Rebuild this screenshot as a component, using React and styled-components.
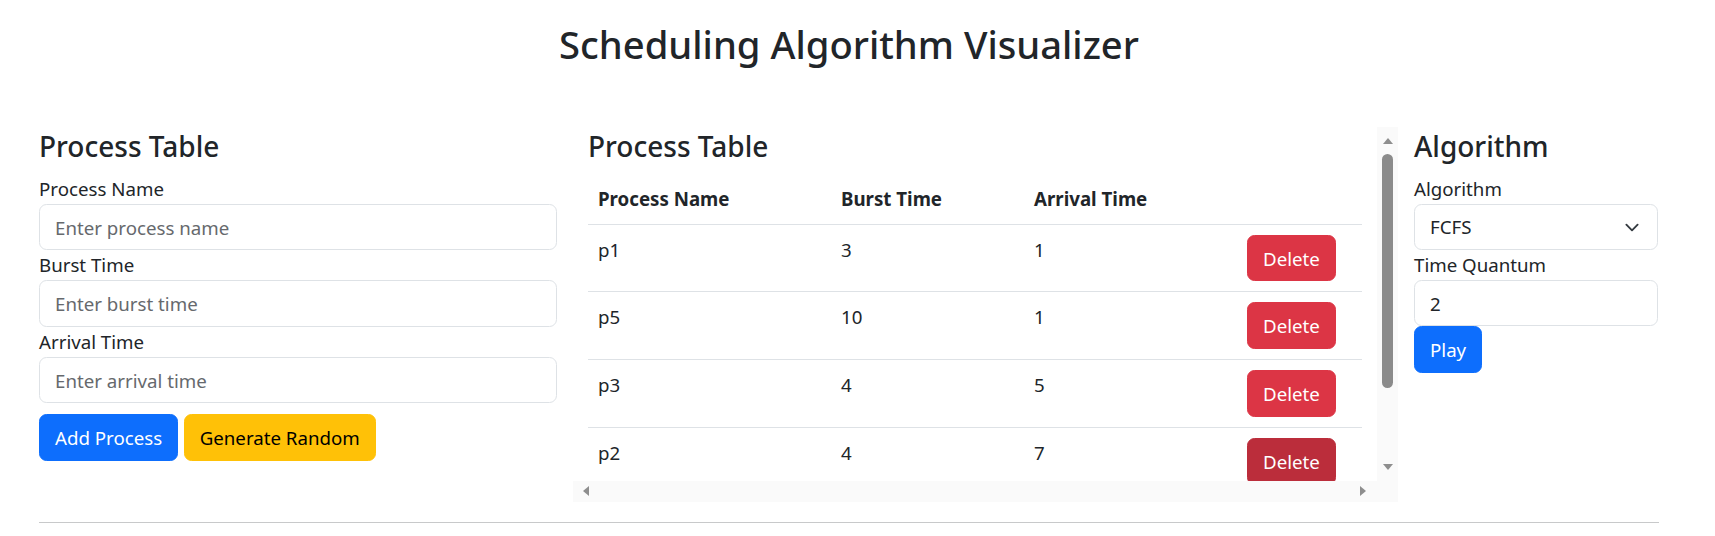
import styled, { createGlobalStyle } from "styled-components";

const GlobalStyle = createGlobalStyle`
  * {
    box-sizing: border-box;
  }

  body {
    margin: 0;
    background: #fff;
    color: #212529;
    font-family: "Noto Sans", "Segoe UI", sans-serif;
    font-size: 18.7px;
    line-height: 30px;
  }
`;

const tones = {
  primary: { bg: "#0d6efd", fg: "#fff" },
  warning: { bg: "#ffc107", fg: "#000" },
  danger: { bg: "#dc3545", fg: "#fff" },
  dangerHover: { bg: "#bb2d3b", fg: "#fff" },
};

const Page = styled.div`
  width: 1698px;
  padding: 20px 39px 0;
`;

const Title = styled.h2`
  margin: 0 0 58.7px;
  text-align: center;
  font-size: 38.2px;
  line-height: 48px;
  font-weight: 500;
`;

const Row = styled.div`
  display: grid;
  grid-template-columns: 518px 825px 244px;
  column-gap: 16px;
  align-items: start;
`;

const Panel = styled.section`
  display: flex;
  flex-direction: column;
  padding-top: 1px;
`;

const PanelTitle = styled.h4`
  margin: 0 0 10px;
  font-size: 28px;
  line-height: 36px;
  font-weight: 500;
`;

const Label = styled.label`
  display: block;
`;

const Field = styled.input`
  display: block;
  width: 100%;
  height: 46.5px;
  padding: 1px 15px 0;
  border: 1px solid #dee2e6;
  border-radius: 7.5px;
  background: #fff;
  color: #212529;
  font: inherit;
  outline: none;

  &::placeholder {
    color: #66696d;
    opacity: 1;
  }
`;

const SelectBox = styled.div`
  display: flex;
  align-items: center;
  justify-content: space-between;
  height: 46px;
  padding: 1px 15px 0;
  border: 1px solid #dee2e6;
  border-radius: 7.5px;
  background: #fff;
`;

const ButtonRow = styled.div`
  display: flex;
  gap: 5.5px;
  margin-top: ${(p) => p.$gap || 0}px;
`;

const Button = styled.button`
  height: ${(p) => p.$height || 47}px;
  padding: 1px 15px 0;
  border: 1px solid ${(p) => tones[p.$tone].bg};
  border-radius: 7.5px;
  background: ${(p) => tones[p.$tone].bg};
  color: ${(p) => tones[p.$tone].fg};
  font: inherit;
  line-height: 30px;
  cursor: pointer;
`;

const ScrollFrame = styled.div`
  display: grid;
  grid-template-columns: 804px 21px;
  grid-template-rows: 354px 21px;
  background: #fafafa;
`;

const Viewport = styled.div`
  overflow: hidden;
  padding: 1px 15px 0;
  background: #fff;
`;

const Table = styled.table`
  width: 774px;
  border-collapse: collapse;
  table-layout: fixed;

  th,
  td {
    padding: 10px;
    border-bottom: 1px solid #dee2e6;
    vertical-align: top;
    text-align: left;
  }

  th {
    font-weight: 700;
  }
`;

const VBar = styled.div`
  display: flex;
  flex-direction: column;
  align-items: center;
  justify-content: space-between;
`;

const HBar = styled.div`
  display: flex;
  align-items: center;
  justify-content: space-between;
  padding: 0 11px 0 10px;
`;

const ArrowSlot = styled.div`
  display: flex;
  align-items: center;
  justify-content: center;
  width: 100%;
  height: 28px;
`;

const Thumb = styled.div`
  width: 10.7px;
  height: 234px;
  margin-top: -1px;
  margin-bottom: auto;
  border-radius: 6px;
  background: #8b8b8b;
`;

const arrowBorders = {
  up: "border-left: 5px solid transparent; border-right: 5px solid transparent; border-bottom: 6px solid #8e8e8e;",
  down: "border-left: 5px solid transparent; border-right: 5px solid transparent; border-top: 6px solid #8e8e8e;",
  left: "border-top: 5px solid transparent; border-bottom: 5px solid transparent; border-right: 6px solid #8e8e8e;",
  right: "border-top: 5px solid transparent; border-bottom: 5px solid transparent; border-left: 6px solid #8e8e8e;",
};

const Arrow = styled.span`
  display: block;
  width: 0;
  height: 0;
  ${(p) => arrowBorders[p.$dir]}
`;

const Corner = styled.div`
  background: #fafafa;
`;

const Divider = styled.hr`
  margin: 20px 0 0;
  border: 0;
  border-top: 1px solid #c8c9ca;
`;

const processes = [
  { name: "p1", burst: 3, arrival: 1 },
  { name: "p5", burst: 10, arrival: 1 },
  { name: "p3", burst: 4, arrival: 5 },
  { name: "p2", burst: 4, arrival: 7 },
];

function Chevron() {
  return (
    <svg width="20" height="15" viewBox="0 0 16 16" fill="none">
      <path d="m2 5 6 6 6-6" stroke="#343a40" strokeWidth="2" strokeLinecap="round" strokeLinejoin="round" />
    </svg>
  );
}

export default function App() {
  return (
    <Page>
      <GlobalStyle />
      <Title>Scheduling Algorithm Visualizer</Title>

      <Row>
        <Panel>
          <PanelTitle>Process Table</PanelTitle>
          <Label>Process Name</Label>
          <Field type="text" placeholder="Enter process name" />
          <Label>Burst Time</Label>
          <Field type="text" placeholder="Enter burst time" />
          <Label>Arrival Time</Label>
          <Field type="text" placeholder="Enter arrival time" />
          <ButtonRow $gap={11}>
            <Button $tone="primary">Add Process</Button>
            <Button $tone="warning">Generate Random</Button>
          </ButtonRow>
        </Panel>

        <ScrollFrame>
          <Viewport>
            <PanelTitle>Process Table</PanelTitle>
            <Table>
              <colgroup>
                <col style={{ width: 243 }} />
                <col style={{ width: 193 }} />
                <col style={{ width: 213 }} />
                <col style={{ width: 125 }} />
              </colgroup>
              <thead>
                <tr>
                  <th>Process Name</th>
                  <th>Burst Time</th>
                  <th>Arrival Time</th>
                  <th></th>
                </tr>
              </thead>
              <tbody>
                {processes.map((p, i) => (
                  <tr key={p.name}>
                    <td>{p.name}</td>
                    <td>{p.burst}</td>
                    <td>{p.arrival}</td>
                    <td>
                      <Button $tone={i === processes.length - 1 ? "dangerHover" : "danger"} $height={46.8}>
                        Delete
                      </Button>
                    </td>
                  </tr>
                ))}
              </tbody>
            </Table>
          </Viewport>
          <VBar>
            <ArrowSlot><Arrow $dir="up" /></ArrowSlot>
            <Thumb />
            <ArrowSlot><Arrow $dir="down" /></ArrowSlot>
          </VBar>
          <HBar>
            <Arrow $dir="left" />
            <Arrow $dir="right" />
          </HBar>
          <Corner />
        </ScrollFrame>

        <Panel>
          <PanelTitle>Algorithm</PanelTitle>
          <Label>Algorithm</Label>
          <SelectBox>
            <span>FCFS</span>
            <Chevron />
          </SelectBox>
          <Label>Time Quantum</Label>
          <Field type="text" defaultValue="2" />
          <ButtonRow>
            <Button $tone="primary" $height={46.5}>Play</Button>
          </ButtonRow>
        </Panel>
      </Row>

      <Divider />
    </Page>
  );
}
